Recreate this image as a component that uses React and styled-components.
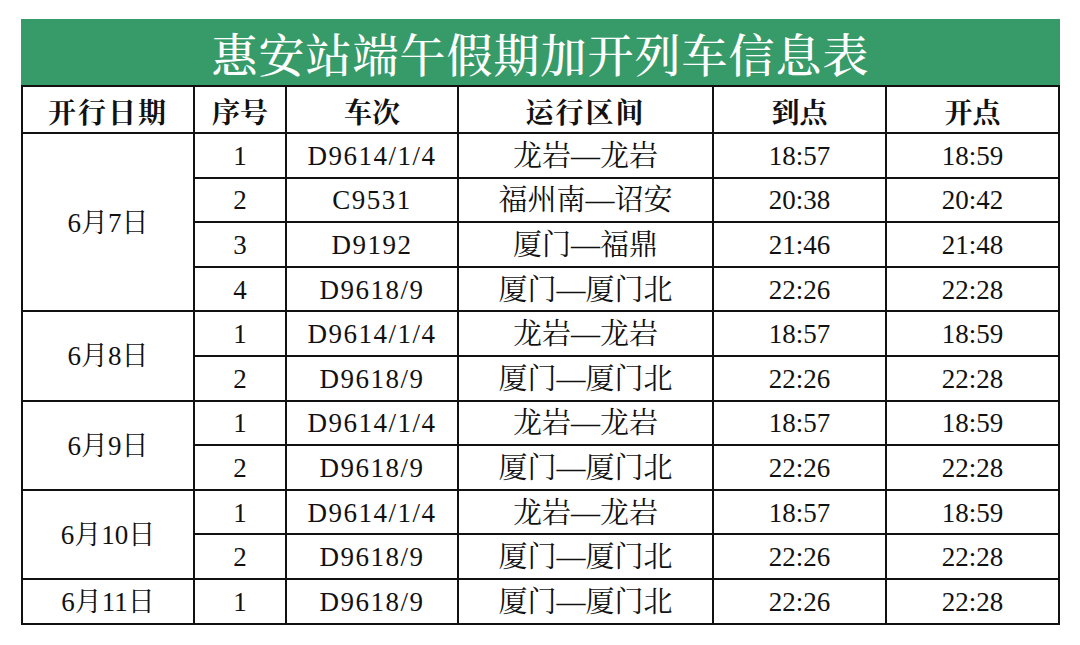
import React from "react";
import styled, { createGlobalStyle } from "styled-components";

const GlobalStyle = createGlobalStyle`
  body {
    margin: 0;
    background: #ffffff;
    font-family: "Liberation Serif", "Noto Serif CJK SC", "Noto Sans CJK SC", serif;
  }
`;

const Page = styled.div`
  width: 1080px;
  height: 645px;
  padding: 19px 0 0 21px;
  box-sizing: border-box;
`;

const Title = styled.div`
  width: 1039px;
  height: 66px;
  background: #379b69;
  color: #ffffff;
  font-family: "Noto Serif CJK SC", "Noto Sans CJK SC", serif;
  font-size: 46px;
  font-weight: 500;
  line-height: 66px;
  text-align: center;
  letter-spacing: 1px;
`;

const Table = styled.table`
  width: 1039px;
  border-collapse: collapse;
  border: 2px solid #111;
  table-layout: fixed;
  color: #111;

  th,
  td {
    border: 2px solid #111;
    padding: 2px 0 0;
    text-align: center;
    vertical-align: middle;
    line-height: 1;
  }
`;

const HeadCell = styled.th`
  height: 43px;
  font-family: "Noto Serif CJK SC", "Noto Sans CJK SC", serif;
  font-size: 28px;
  font-weight: 700;
  letter-spacing: ${(p) => (p.$wide ? "2px" : "0")};
`;

const Row = styled.tr`
  height: 44.6px;
`;

const Cell = styled.td`
  font-size: ${(p) => (p.$cjk ? "29px" : "27px")};
  letter-spacing: ${(p) => (p.$code ? "1.5px" : "0")};
`;

const columns = [172, 92, 172, 255, 173, 173];

const schedule = [
  {
    date: "6月7日",
    trains: [
      ["1", "D9614/1/4", "龙岩—龙岩", "18:57", "18:59"],
      ["2", "C9531", "福州南—诏安", "20:38", "20:42"],
      ["3", "D9192", "厦门—福鼎", "21:46", "21:48"],
      ["4", "D9618/9", "厦门—厦门北", "22:26", "22:28"],
    ],
  },
  {
    date: "6月8日",
    trains: [
      ["1", "D9614/1/4", "龙岩—龙岩", "18:57", "18:59"],
      ["2", "D9618/9", "厦门—厦门北", "22:26", "22:28"],
    ],
  },
  {
    date: "6月9日",
    trains: [
      ["1", "D9614/1/4", "龙岩—龙岩", "18:57", "18:59"],
      ["2", "D9618/9", "厦门—厦门北", "22:26", "22:28"],
    ],
  },
  {
    date: "6月10日",
    trains: [
      ["1", "D9614/1/4", "龙岩—龙岩", "18:57", "18:59"],
      ["2", "D9618/9", "厦门—厦门北", "22:26", "22:28"],
    ],
  },
  {
    date: "6月11日",
    trains: [["1", "D9618/9", "厦门—厦门北", "22:26", "22:28"]],
  },
];

export default function App() {
  return (
    <>
      <GlobalStyle />
      <Page>
        <Title>惠安站端午假期加开列车信息表</Title>
        <Table>
          <colgroup>
            {columns.map((w, i) => (
              <col key={i} style={{ width: w }} />
            ))}
          </colgroup>
          <thead>
            <tr>
              <HeadCell $wide>开行日期</HeadCell>
              <HeadCell>序号</HeadCell>
              <HeadCell>车次</HeadCell>
              <HeadCell $wide>运行区间</HeadCell>
              <HeadCell>到点</HeadCell>
              <HeadCell>开点</HeadCell>
            </tr>
          </thead>
          <tbody>
            {schedule.map((group) =>
              group.trains.map((t, i) => (
                <Row key={group.date + i}>
                  {i === 0 && (
                    <Cell rowSpan={group.trains.length}>{group.date}</Cell>
                  )}
                  <Cell>{t[0]}</Cell>
                  <Cell $code>{t[1]}</Cell>
                  <Cell $cjk>{t[2]}</Cell>
                  <Cell>{t[3]}</Cell>
                  <Cell>{t[4]}</Cell>
                </Row>
              ))
            )}
          </tbody>
        </Table>
      </Page>
    </>
  );
}
